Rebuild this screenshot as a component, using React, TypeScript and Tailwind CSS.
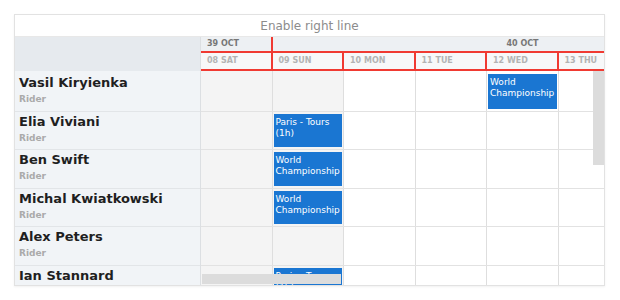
const days = ['08 SAT', '09 SUN', '10 MON', '11 TUE', '12 WED', '13 THU', '14 FRI'];

const riders: { name: string; events: Record<number, string> }[] = [
  { name: 'Vasil Kiryienka', events: { 4: 'World Championship' } },
  { name: 'Elia Viviani', events: { 1: 'Paris - Tours (1h)' } },
  { name: 'Ben Swift', events: { 1: 'World Championship' } },
  { name: 'Michal Kwiatkowski', events: { 1: 'World Championship' } },
  { name: 'Alex Peters', events: {} },
  { name: 'Ian Stannard', events: { 1: 'Paris - Tours (1h)' } },
];

export default function App() {
  return (
    <div className="w-[620px] h-[300px] bg-white pt-[14px] pl-[14px] font-['DejaVu_Sans',sans-serif]">
      <div className="w-[591px] h-[272px] border border-[#e2e2e2] flex flex-col overflow-hidden shadow-[0_1px_2px_rgba(0,0,0,0.06)]">
        {/* title */}
        <div className="h-[22px] shrink-0 flex items-center justify-center text-[12px] text-[#8c8c8c] border-b border-[#e8e8e8]">
          Enable right line
        </div>

        {/* header */}
        <div className="h-[34px] shrink-0 flex">
          <div className="w-[186px] shrink-0 bg-[#e6eaee] border-r border-[#dcdfe2]" />
          <div className="flex-1 overflow-hidden flex flex-col">
            <div className="h-[16px] flex bg-[#edf0f3] text-[8px] font-bold text-[#777]">
              <div className="w-[71.5px] shrink-0 border-r-2 border-b-2 border-[#f03a32] pl-[6px] flex items-center">39 OCT</div>
              <div className="w-[500px] shrink-0 border-b-2 border-[#f03a32] flex items-center justify-center">40 OCT</div>
            </div>
            <div className="h-[18px] flex bg-[#f7f8f9] text-[8px] font-bold text-[#b3b3b3]">
              {days.map((d) => (
                <div key={d} className="w-[71.5px] shrink-0 border-r-2 border-b-2 border-[#f03a32] pl-[6px] flex items-center">
                  {d}
                </div>
              ))}
            </div>
          </div>
        </div>

        {/* body */}
        <div className="flex-1 flex relative overflow-hidden">
          <div className="w-[186px] shrink-0 bg-[#f1f4f7] border-r border-[#dcdfe2]">
            {riders.map((r, ri) => (
              <div
                key={r.name}
                className={`border-b border-[#e2e5e8] pl-[4px] ${ri === 0 ? 'h-[40.5px] pt-[4px]' : 'h-[38.6px] pt-[2px]'}`}
              >
                <div className="text-[13px] font-bold text-[#1f1f1f] leading-[16px]">{r.name}</div>
                <div className="text-[9px] font-bold text-[#aaaaaa] leading-[14px] mt-[1px]">Rider</div>
              </div>
            ))}
          </div>
          <div className="flex-1 overflow-hidden">
            {riders.map((r, ri) => (
              <div
                key={r.name}
                className={`flex border-b border-[#e2e2e2] ${ri === 0 ? 'h-[40.5px]' : 'h-[38.6px]'}`}
              >
                {days.map((d, i) => (
                  <div
                    key={d}
                    className={`w-[71.5px] shrink-0 border-r border-[#dedede] pl-[1px] pr-[1px] pb-[2px] ${
                      ri === 0 ? 'pt-[3px]' : 'pt-[2px]'
                    } ${i < 2 ? 'bg-[#f4f4f4]' : 'bg-white'}`}
                  >
                    {r.events[i] && (
                      <div className="h-full bg-[#1a76d2] text-white text-[9px] leading-[11px] px-[2px] pt-[3px]">
                        {r.events[i]}
                      </div>
                    )}
                  </div>
                ))}
              </div>
            ))}
          </div>

          {/* scrollbars */}
          <div className="absolute right-0 top-0 w-[11px] h-[94px] bg-[#dcdcdc]" />
          <div className="absolute left-[187px] bottom-[1px] w-[139px] h-[10px] bg-[#dcdcdc]" />
        </div>
      </div>
    </div>
  );
}
